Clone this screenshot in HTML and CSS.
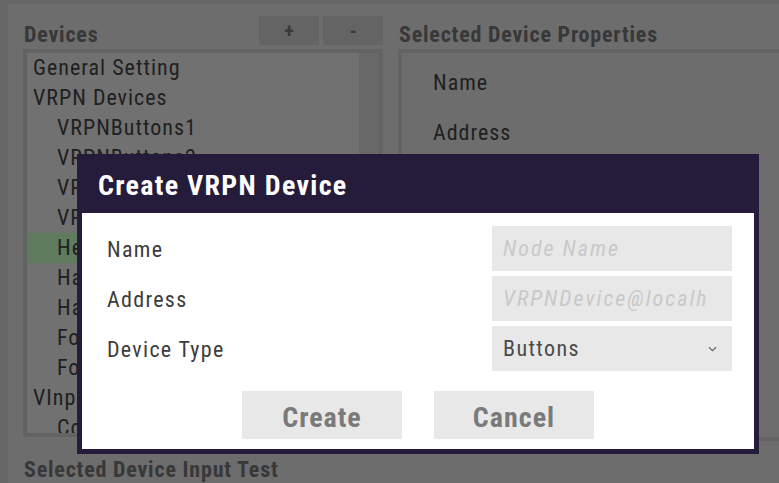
FILE: index.html
```html
<!DOCTYPE html>
<html>
<head>
<meta charset="utf-8">
<link rel="stylesheet" href="styles.css">
</head>
<body>
<div class="app">
  <div class="panel">
    <div class="col-left">
      <div class="head-row">
        <div class="heading">Devices</div>
        <div class="tool-btns">
          <div class="tool-btn">+</div>
          <div class="tool-btn">-</div>
        </div>
      </div>
      <div class="list-box">
        <div class="list">
          <div class="item">General Setting</div>
          <div class="item">VRPN Devices</div>
          <div class="item sub">VRPNButtons1</div>
          <div class="item sub">VRPNButtons2</div>
          <div class="item sub">VRPNAnalog1</div>
          <div class="item sub">VRPNTracker1</div>
          <div class="item sub selected">HeadTracker</div>
          <div class="item sub">HandLeft</div>
          <div class="item sub">HandRight</div>
          <div class="item sub">FootLeft</div>
          <div class="item sub">FootRight</div>
          <div class="item">VInput Devices</div>
          <div class="item sub">Controller</div>
        </div>
        <div class="scrollbar"></div>
      </div>
      <div class="heading bottom-heading">Selected Device Input Test</div>
    </div>
    <div class="col-right">
      <div class="head-row">
        <div class="heading">Selected Device Properties</div>
      </div>
      <div class="props-box">
        <div class="prop">Name</div>
        <div class="prop">Address</div>
      </div>
    </div>
  </div>

  <div class="dialog">
    <div class="dialog-title">Create VRPN Device</div>
    <div class="dialog-body">
      <div class="form">
        <div class="label">Name</div>
        <div class="field placeholder"><span class="field-text">Node Name</span></div>
        <div class="label">Address</div>
        <div class="field placeholder"><span class="field-text">VRPNDevice@localhost</span></div>
        <div class="label">Device Type</div>
        <div class="field select"><span class="field-text">Buttons</span>
          <svg class="chev" width="9" height="6" viewBox="0 0 9 6"><path d="M1 1.2 L4.5 4.6 L8 1.2" fill="none" stroke="#6a6a6a" stroke-width="1.3"/></svg>
        </div>
      </div>
      <div class="actions">
        <div class="btn">Create</div>
        <div class="btn">Cancel</div>
      </div>
    </div>
  </div>
</div>
</body>
</html>
```

FILE: styles.css
```css
html, body {
  margin: 0;
  padding: 0;
}
body {
  font-family: "Roboto Condensed", Roboto, "Liberation Sans", sans-serif;
  background: #676767;
}
.app {
  position: relative;
  width: 779px;
  height: 483px;
  overflow: hidden;
  background: #676767;
  padding: 4px 0 0 8px;
  box-sizing: border-box;
}
.panel {
  background: #6d6d6d;
  height: 520px;
  width: 800px;
  box-sizing: border-box;
  padding: 12px 0 0 15px;
  display: flex;
  gap: 15px;
}
.col-left {
  width: 360px;
  display: flex;
  flex-direction: column;
}
.col-right {
  flex: 1;
  display: flex;
  flex-direction: column;
}
.head-row {
  height: 29px;
  margin-bottom: 4px;
  display: flex;
  justify-content: space-between;
  align-items: center;
}
.heading {
  font-weight: 700;
  font-size: 22px;
  color: #383838;
  padding-left: 1px;
  letter-spacing: 0.8px;
}
.head-row .heading {
  padding-top: 8px;
}
.tool-btns {
  display: flex;
  gap: 4px;
}
.tool-btn {
  width: 60px;
  height: 29px;
  background: #646464;
  color: #3a3a3a;
  font-size: 20px;
  font-weight: 700;
  display: flex;
  align-items: center;
  justify-content: center;
}
.list-box {
  height: 388px;
  box-sizing: border-box;
  border: 4px solid #636363;
  display: flex;
  background: #717171;
}
.list {
  flex: 1;
  overflow: hidden;
}
.scrollbar {
  width: 20px;
  background: #686868;
}
.item {
  height: 30px;
  line-height: 30px;
  font-size: 22px;
  letter-spacing: 1px;
  color: #202020;
  padding-left: 6px;
  white-space: nowrap;
}
.item.sub {
  padding-left: 30px;
}
.item.selected {
  background: #5e7b5e;
}
.bottom-heading {
  margin-top: 20px;
}
.props-box {
  height: 392px;
  box-sizing: border-box;
  border: 4px solid #636363;
  border-right: none;
  padding: 15px 0 0 31px;
}
.prop {
  height: 50px;
  line-height: 30px;
  font-size: 22px;
  letter-spacing: 1px;
  color: #202020;
}

.dialog {
  position: absolute;
  left: 77px;
  top: 154px;
  width: 682px;
  height: 300px;
  box-sizing: border-box;
  background: #251b3b;
  padding: 0 5px 5px;
  display: flex;
  flex-direction: column;
}
.dialog-title {
  height: 59px;
  line-height: 64px;
  padding-left: 16px;
  color: #ffffff;
  font-weight: 700;
  font-size: 28px;
  letter-spacing: 1.3px;
}
.dialog-body {
  flex: 1;
  background: #ffffff;
  padding: 13px 22px 0 25px;
}
.form {
  display: grid;
  grid-template-columns: 1fr 240px;
  grid-auto-rows: 45px;
  row-gap: 5px;
}
.label {
  font-size: 22px;
  letter-spacing: 1.3px;
  color: #3c3c3c;
  line-height: 48px;
}
.field {
  background: #e8e8e8;
  font-size: 22px;
  letter-spacing: 1.4px;
  line-height: 48px;
  padding-left: 11px;
  display: flex;
  align-items: center;
}
.field-text {
  display: block;
  max-width: 203px;
  overflow: hidden;
  white-space: nowrap;
}
.placeholder {
  color: #c9c9c9;
  font-style: italic;
  letter-spacing: 2px;
}
.select {
  color: #4a4a4a;
  justify-content: space-between;
  padding-right: 15px;
}
.actions {
  display: flex;
  gap: 32px;
  margin-top: 20px;
  padding-left: 135px;
}
.btn {
  width: 160px;
  height: 48px;
  background: #e8e8e8;
  color: #7a7a7a;
  font-weight: 700;
  font-size: 28px;
  letter-spacing: 1px;
  display: flex;
  align-items: center;
  justify-content: center;
  padding-top: 4px;
  box-sizing: border-box;
}
```
